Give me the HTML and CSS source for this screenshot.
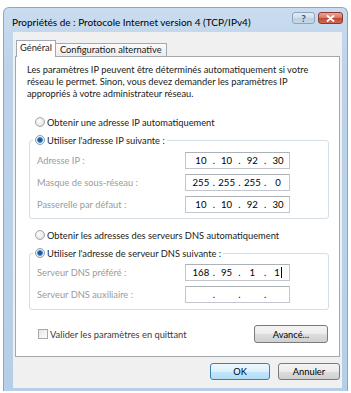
FILE: index.html
```html
<!DOCTYPE html>
<html lang="fr">
<head>
    <meta charset="UTF-8">
    <title>Propriétés de : Protocole Internet version 4 (TCP/IPv4)</title>
    <link rel="stylesheet" href="styles.css">
</head>
<body>
    <div class="window">
        <div class="titlebar">
            <span class="title">Propriétés de : Protocole Internet version 4 (TCP/IPv4)</span>
            <div class="caption">
                <span class="cap help">?</span>
                <span class="cap close">
                    <svg width="9" height="7" viewBox="0 0 9 7"><path d="M1.5 1 L7.5 6 M7.5 1 L1.5 6" stroke="#fff" stroke-width="1.8" stroke-linecap="round"/></svg>
                </span>
            </div>
        </div>

        <div class="client">
            <div class="tabs">
                <div class="tab active">Général</div>
                <div class="tab">Configuration alternative</div>
            </div>

            <div class="panel">
                <p class="intro">Les paramètres IP peuvent être déterminés automatiquement si votre<br>réseau le permet. Sinon, vous devez demander les paramètres IP<br>appropriés à votre administrateur réseau.</p>

                <div class="radio-row"><span class="radio"></span>Obtenir une adresse IP automatiquement</div>
                <fieldset class="group">
                    <legend><span class="radio on"></span>Utiliser l'adresse IP suivante :</legend>
                    <div class="field-row">
                        <span class="field-label">Adresse IP :</span>
                        <div class="ip-box"><span class="seg">10</span><span class="dot">.</span><span class="seg">10</span><span class="dot">.</span><span class="seg">92</span><span class="dot">.</span><span class="seg">30</span></div>
                    </div>
                    <div class="field-row">
                        <span class="field-label">Masque de sous-réseau :</span>
                        <div class="ip-box"><span class="seg">255</span><span class="dot">.</span><span class="seg">255</span><span class="dot">.</span><span class="seg">255</span><span class="dot">.</span><span class="seg">0</span></div>
                    </div>
                    <div class="field-row">
                        <span class="field-label">Passerelle par défaut :</span>
                        <div class="ip-box"><span class="seg">10</span><span class="dot">.</span><span class="seg">10</span><span class="dot">.</span><span class="seg">92</span><span class="dot">.</span><span class="seg">30</span></div>
                    </div>
                </fieldset>

                <div class="radio-row dns"><span class="radio"></span>Obtenir les adresses des serveurs DNS automatiquement</div>
                <fieldset class="group dns-group">
                    <legend><span class="radio on"></span>Utiliser l'adresse de serveur DNS suivante :</legend>
                    <div class="field-row">
                        <span class="field-label">Serveur DNS préféré :</span>
                        <div class="ip-box"><span class="seg">168</span><span class="dot">.</span><span class="seg">95</span><span class="dot">.</span><span class="seg">1</span><span class="dot">.</span><span class="seg">1<span class="caret"></span></span></div>
                    </div>
                    <div class="field-row">
                        <span class="field-label">Serveur DNS auxiliaire :</span>
                        <div class="ip-box"><span class="seg"></span><span class="dot">.</span><span class="seg"></span><span class="dot">.</span><span class="seg"></span><span class="dot">.</span><span class="seg"></span></div>
                    </div>
                </fieldset>

                <div class="bottom-row">
                    <div class="check-row"><span class="checkbox"></span>Valider les paramètres en quittant</div>
                    <button class="btn advanced">Avancé...</button>
                </div>
            </div>

            <div class="dialog-buttons">
                <button class="btn default ok">OK</button>
                <button class="btn cancel">Annuler</button>
            </div>
        </div>
    </div>
</body>
</html>
```

FILE: styles.css
```css
:root {
    --frame: #bcd3ea;
    --frame-edge: #8fa6c0;
    --client-bg: #f0f0f0;
    --panel-border: #a3a7ae;
    --group-border: #d5dde5;
    --field-border: #c3c7cd;
    --label-grey: #9a9a9a;
    --text: #1a1a1a;
}

body {
    margin: 0;
    background: #fff;
    font-family: Lato, "Open Sans", sans-serif;
    font-size: 9.3px;
    color: var(--text);
}

.window {
    margin: 7px 0 0 3px;
    width: 345px;
    height: 384px;
    box-sizing: border-box;
    display: flex;
    flex-direction: column;
    background: linear-gradient(#cadcef, #bcd3ea 60px, #b6cfe9);
    border: 1px solid var(--frame-edge);
    border-bottom: none;
    border-radius: 6px 6px 0 0;
}

/* title bar */
.titlebar {
    height: 24px;
    display: flex;
    justify-content: space-between;
    align-items: flex-start;
    padding: 0 4px 0 8px;
}
.title {
    padding-top: 7px;
    line-height: 14px;
    font-size: 10px;
    color: #000;
}
.caption {
    display: flex;
    gap: 3px;
    margin-top: 4px;
}
.cap {
    height: 12px;
    box-sizing: border-box;
    border-radius: 3px;
    display: flex;
    align-items: center;
    justify-content: center;
}
.help {
    width: 23px;
    border: 1px solid #8ea3bd;
    background: linear-gradient(#e2ecf6, #cfdeed 50%, #bccfe4 50%, #c6d8ea);
    color: #43536a;
    font-size: 10px;
    font-weight: bold;
    line-height: 10px;
}
.close {
    width: 25px;
    border: 1px solid #8c3b32;
    background: linear-gradient(#e7a597, #d47866 50%, #c2452f 50%, #cf6a52);
}

/* client area */
.client {
    flex: none;
    height: 356px;
    box-sizing: border-box;
    margin: 0 5px 0 9px;
    padding: 8px 2px 8px 2px;
    background: var(--client-bg);
    display: flex;
    flex-direction: column;
}

.tabs {
    height: 16px;
    display: flex;
    align-items: flex-end;
    padding-left: 1px;
}
.tab {
    box-sizing: border-box;
    border: 1px solid var(--panel-border);
    border-bottom: none;
    padding: 0 3px;
    white-space: nowrap;
}
.tab.active {
    position: relative;
    z-index: 1;
    height: 17px;
    margin-bottom: -1px;
    line-height: 14px;
    background: #fff;
}
.tab:not(.active) {
    height: 13px;
    margin-left: -1px;
    padding: 0 4px;
    line-height: 12px;
    background: linear-gradient(#fbfbfb, #ececec);
}

.panel {
    flex: 1;
    background: #fff;
    border: 1px solid var(--panel-border);
    padding-top: 7px;
}

.intro {
    margin: 0 0 0 11px;
    line-height: 12px;
    white-space: nowrap;
}

.radio-row {
    display: flex;
    align-items: center;
    gap: 2px;
    height: 12px;
    margin: 16px 0 0 19px;
}
.radio-row.dns {
    margin-top: 10px;
}

.radio {
    width: 10px;
    height: 10px;
    box-sizing: border-box;
    border-radius: 50%;
    border: 1px solid #a6a6a6;
    background: radial-gradient(circle at 40% 40%, #fff, #d8d8d8);
}
.radio.on {
    border-color: #8a9db0;
    background: radial-gradient(circle, #23588f 0 1.5px, #3f8fd6 2.5px, #a8cbe9 3px, #f4f4f4 3.6px);
}

.group {
    margin: 6px 10px 0 13px;
    padding: 6px 0 5px 0;
    border: 1px solid var(--group-border);
    border-radius: 3px;
    min-width: 0;
}
.dns-group {
    padding: 5px 0 6px 0;
}
.group legend {
    margin-left: 3px;
    padding: 0 2px;
    height: 12px;
    display: flex;
    align-items: center;
    gap: 2px;
}

.field-row {
    display: flex;
    align-items: center;
    height: 17px;
    padding-left: 7px;
}
.field-row + .field-row {
    margin-top: 5px;
}
.field-label {
    width: 148px;
    color: var(--label-grey);
}

.ip-box {
    width: 105px;
    height: 17px;
    box-sizing: border-box;
    display: flex;
    align-items: center;
    padding-left: 4px;
    border: 1px solid var(--field-border);
    border-top-color: #adb2b9;
    background: #fff;
    color: #000;
    font-size: 9.6px;
}
.seg {
    width: 22px;
    text-align: center;
}
.dot {
    width: 4px;
    text-align: center;
}
.caret {
    display: inline-block;
    width: 1px;
    height: 11px;
    margin-left: 1px;
    vertical-align: -2px;
    background: #000;
}

.bottom-row {
    display: flex;
    justify-content: space-between;
    align-items: center;
    height: 18px;
    margin: 15px 11px 0 22px;
}
.check-row {
    display: flex;
    align-items: center;
    gap: 2px;
    color: #3a3a3a;
}
.checkbox {
    width: 10px;
    height: 10px;
    box-sizing: border-box;
    border: 1px solid #a9a9a9;
    background: linear-gradient(135deg, #e4e4e4, #fff);
}

.btn {
    font: inherit;
    color: #000;
    padding: 0;
    border: 1px solid #7a7a7a;
    border-radius: 3px;
    background: linear-gradient(#f4f4f4, #ebebeb 50%, #dddddd 50%, #d0d0d0);
}
.advanced {
    width: 74px;
    height: 18px;
}

.dialog-buttons {
    display: flex;
    justify-content: flex-end;
    gap: 8px;
    margin-top: 6px;
}
.ok {
    width: 60px;
    height: 17px;
}
.cancel {
    width: 62px;
    height: 17px;
}
.btn.default {
    border-color: #3c7fb1;
    background: linear-gradient(#eef8fe, #dcf1fc 50%, #c4e7fb 50%, #b2ddf5);
}
```
